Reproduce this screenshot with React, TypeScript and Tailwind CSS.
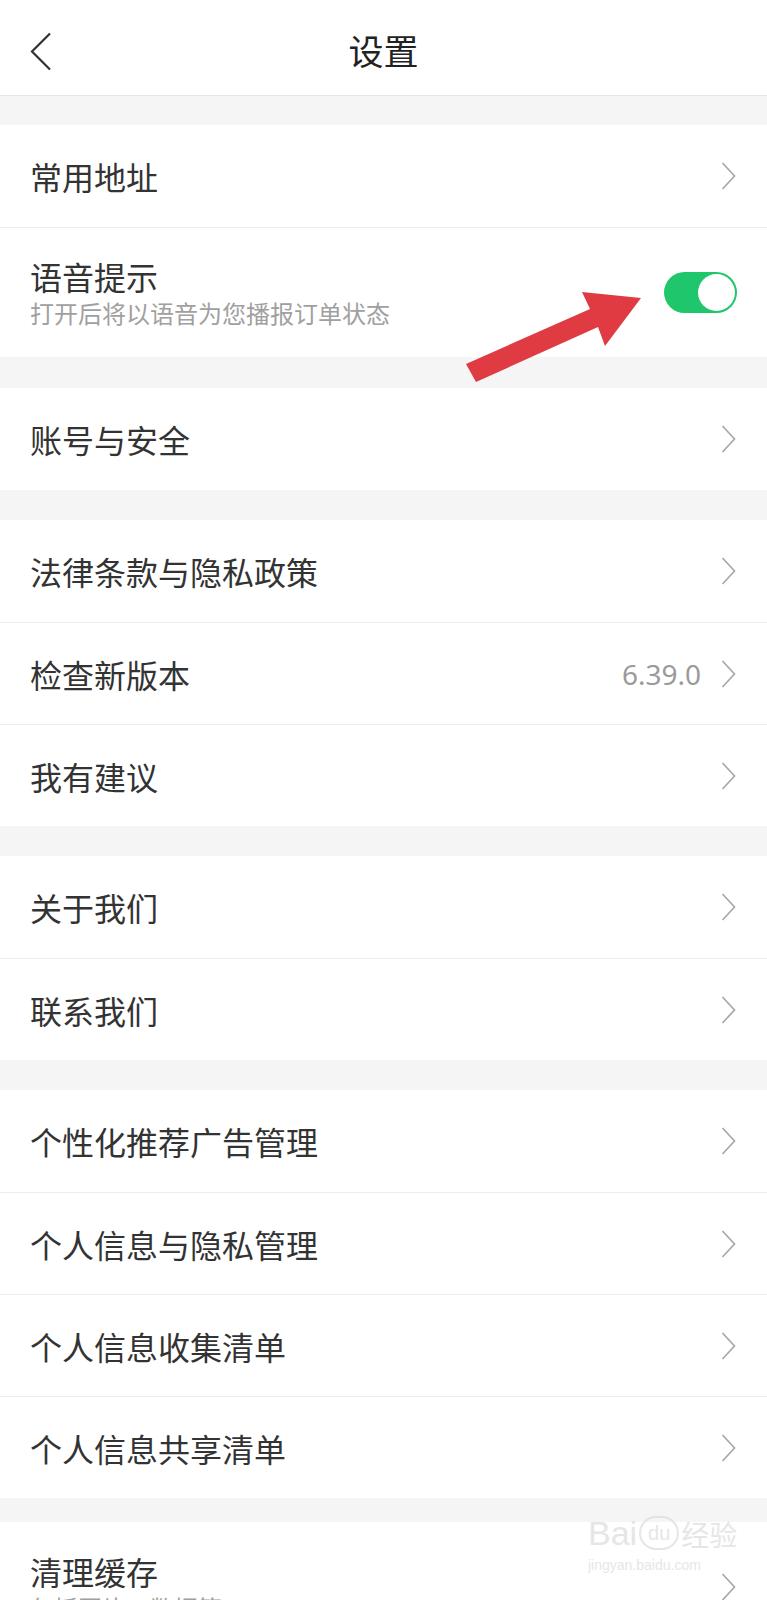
import type { ReactNode } from 'react';

const font = { fontFamily: '"Noto Sans CJK SC", "Noto Sans", sans-serif' };

function Chevron() {
  return (
    <svg width="15" height="28" viewBox="0 0 15 28" className="shrink-0">
      <polyline points="1.5,1 13.5,14 1.5,27" fill="none" stroke="#a8a8a8" strokeWidth="1.7" />
    </svg>
  );
}

function Row({ title, sub, right, first, tall }: { title: string; sub?: string; right?: ReactNode; first?: boolean; tall?: boolean }) {
  return (
    <div
      className={`flex items-center justify-between pl-[30px] pr-[31px] bg-white ${tall ? 'h-[130px]' : 'h-[102px]'} ${first ? '' : 'border-t border-[#ececec]'}`}
    >
      <div className="flex flex-col">
        <span className="text-[32px] leading-[40px] text-[#333]">{title}</span>
        {sub && <span className="text-[24px] leading-[32px] text-[#a0a0a0] mt-[1px]">{sub}</span>}
      </div>
      {right ?? <Chevron />}
    </div>
  );
}

function Toggle() {
  return (
    <div className="w-[73px] h-[41px] rounded-full bg-[#20c66b] flex items-center justify-end p-[2px] mr-[-1px]">
      <div className="w-[37px] h-[37px] rounded-full bg-white" />
    </div>
  );
}

export default function App() {
  return (
    <div className="relative w-[767px] h-[1600px] overflow-hidden bg-[#f5f5f5]" style={font}>
      <header className="h-[96px] bg-white border-b border-[#e6e6e6] relative flex items-center justify-center">
        <svg width="22" height="40" viewBox="0 0 22 40" className="absolute left-[30px] top-[32px]">
          <polyline points="20,1.5 2,19.5 20,37.5" fill="none" stroke="#333" strokeWidth="2.2" />
        </svg>
        <h1 className="text-[35px] leading-[44px] text-[#222] mt-[4px]">设置</h1>
      </header>

      <section className="mt-[29px]">
        <Row first title="常用地址" />
        <Row tall title="语音提示" sub="打开后将以语音为您播报订单状态" right={<Toggle />} />
      </section>

      <section className="mt-[31px]">
        <Row first title="账号与安全" />
      </section>

      <section className="mt-[30px]">
        <Row first title="法律条款与隐私政策" />
        <Row
          title="检查新版本"
          right={
            <div className="flex items-center gap-[20px]">
              <span className="text-[28px] text-[#9a9a9a]" style={{ fontFamily: '"Noto Sans", sans-serif' }}>6.39.0</span>
              <Chevron />
            </div>
          }
        />
        <Row title="我有建议" />
      </section>

      <section className="mt-[30px]">
        <Row first title="关于我们" />
        <Row title="联系我们" />
      </section>

      <section className="mt-[30px]">
        <Row first title="个性化推荐广告管理" />
        <Row title="个人信息与隐私管理" />
        <Row title="个人信息收集清单" />
        <Row title="个人信息共享清单" />
      </section>

      <section className="mt-[24px]">
        <Row first tall title="清理缓存" sub="包括图片、数据等" />
      </section>

      {/* annotation arrow */}
      <svg className="absolute inset-0 pointer-events-none" width="767" height="1600" viewBox="0 0 767 1600">
        <polygon points="466,364 590,309 582,292 641,298 605,346 598,327 476,382" fill="#e03a42" />
      </svg>

      {/* watermark */}
      <div className="absolute left-[588px] top-[1516px] flex flex-col items-start pointer-events-none opacity-70" style={{ fontFamily: '"Liberation Sans", sans-serif' }}>
        <div className="flex items-end gap-[2px] text-[#dcdcdc]">
          <span className="text-[34px] leading-[34px]">Bai</span>
          <span className="w-[40px] h-[34px] rounded-full border-2 border-[#dcdcdc] text-[20px] leading-[30px] text-center">du</span>
          <span className="text-[28px] leading-[32px]" style={font}>经验</span>
        </div>
        <span className="text-[14px] leading-[18px] text-[#dcdcdc] mt-[6px]">jingyan.baidu.com</span>
      </div>
    </div>
  );
}
